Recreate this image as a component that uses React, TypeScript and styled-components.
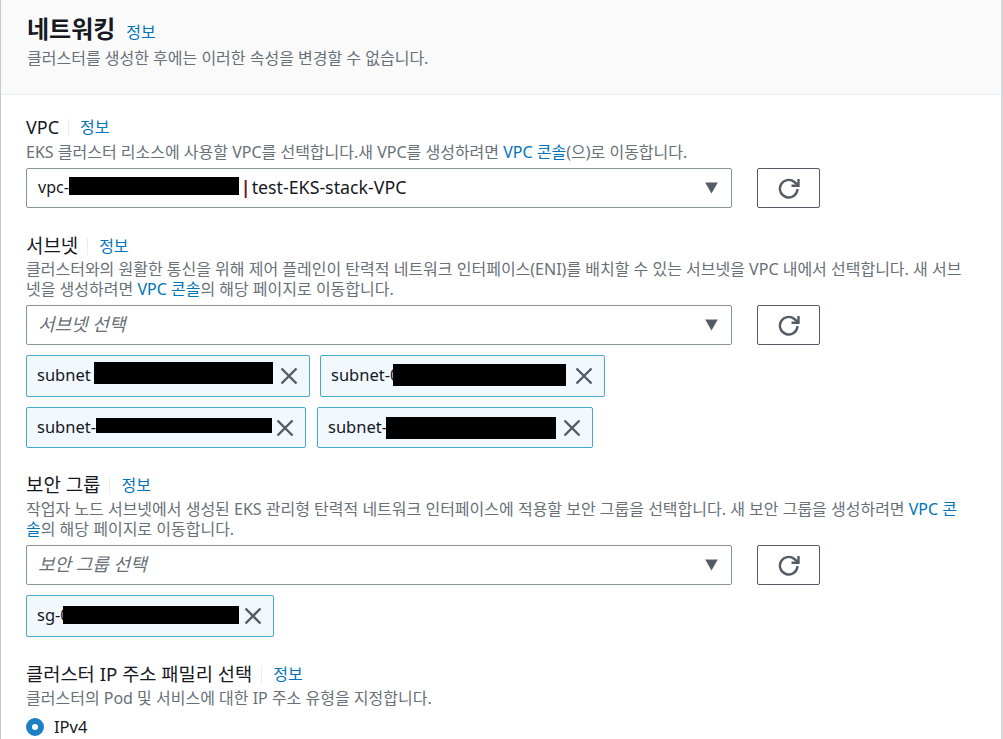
import styled, { createGlobalStyle } from "styled-components";

const GlobalStyle = createGlobalStyle`
  html, body {
    margin: 0;
    padding: 0;
    background: #fff;
    overflow: hidden;
  }
  body {
    font-family: "Noto Sans", "Noto Sans CJK KR", sans-serif;
    color: #16191f;
  }
`;

const Panel = styled.div`
  width: 1003px;
  height: 739px;
  box-sizing: border-box;
  border-left: 1px solid #c6cacd;
  border-right: 2px solid #d5d8da;
  overflow: hidden;
`;

const Header = styled.header`
  height: 95px;
  box-sizing: border-box;
  padding: 14px 26px 0;
  background: #fafafa;
  border-bottom: 1px solid #eaeded;
`;

const TitleRow = styled.div`
  display: flex;
  align-items: baseline;
  gap: 11px;
  height: 30px;
`;

const Title = styled.h2`
  margin: 0;
  font-size: 24px;
  line-height: 30px;
  font-weight: 700;
  color: #16191f;
`;

const InfoLink = styled.a`
  font-size: 16px;
  line-height: 20px;
  color: #0073bb;
`;

const HeaderDesc = styled.p`
  margin: 4px 0 0;
  font-size: 16px;
  line-height: 20px;
  color: #687078;
`;

const Body = styled.div`
  padding: 22px 25px 0;
`;

const Field = styled.section<{ $gap?: number }>`
  margin-bottom: ${p => p.$gap ?? 0}px;
`;

const LabelRow = styled.div`
  display: flex;
  align-items: center;
  height: 20px;
`;

const Label = styled.span<{ $size?: number }>`
  font-size: ${p => p.$size ?? 18.9}px;
  line-height: 20px;
  color: #16191f;
`;

const Divider = styled.span`
  width: 1px;
  height: 17px;
  margin: 0 11px 0 9px;
  background: #eaeded;
`;

const Desc = styled.p<{ $top?: number }>`
  margin: ${p => p.$top ?? 5}px 0 6px;
  width: 945px;
  font-size: 16px;
  line-height: 20px;
  color: #687078;
`;

const DescLink = styled.a`
  color: #0073bb;
`;

const SelectRow = styled.div`
  display: flex;
  align-items: center;
  gap: 25px;
`;

const SelectBox = styled.div`
  width: 706px;
  height: 40px;
  box-sizing: border-box;
  display: flex;
  align-items: center;
  justify-content: space-between;
  padding: 0 13px 0 11px;
  border: 1px solid #879596;
  border-radius: 2px;
  background: #fff;
`;

const SelectValue = styled.span`
  display: flex;
  align-items: center;
  padding-bottom: 2px;
  font-size: 17.8px;
  line-height: 22px;
  color: #16191f;
  white-space: pre;
`;

const ValuePrefix = styled.span`
  font-size: 16px;
`;

const Placeholder = styled.span`
  padding-bottom: 3px;
  font-size: 18px;
  line-height: 22px;
  font-style: italic;
  color: #687078;
`;

const Pipe = styled.span`
  margin: 0 1px 0 2px;
  font-weight: 700;
  color: #6b1626;
`;

const Redacted = styled.span<{ $w: number; $h: number; $top?: number; $left?: number }>`
  display: block;
  flex: none;
  position: relative;
  top: ${p => p.$top ?? 0}px;
  width: ${p => p.$w}px;
  height: ${p => p.$h}px;
  margin-left: ${p => p.$left ?? 0}px;
  background: #000;
`;

const RefreshButton = styled.button`
  width: 63px;
  height: 40px;
  box-sizing: border-box;
  display: flex;
  align-items: center;
  justify-content: center;
  padding: 0;
  border: 1px solid #545b64;
  border-radius: 2px;
  background: #fff;
  color: #545b64;
`;

const TokenRow = styled.div<{ $gap?: number }>`
  display: flex;
  gap: ${p => p.$gap ?? 10}px;
  margin-top: 10px;
`;

const Token = styled.div<{ $w: number; $h?: number }>`
  width: ${p => p.$w}px;
  height: ${p => p.$h ?? 42}px;
  box-sizing: border-box;
  display: flex;
  align-items: center;
  justify-content: space-between;
  padding: 0 11px 0 10px;
  border: 1px solid #44a8d0;
  border-radius: 2px;
  background: #f1f8fe;
`;

const TokenText = styled.span`
  display: flex;
  align-items: center;
  padding-bottom: 2px;
  font-size: 16.5px;
  line-height: 22px;
  color: #16191f;
`;

const RadioRow = styled.label`
  display: flex;
  align-items: center;
  gap: 10px;
  margin-top: 8px;
  font-size: 16.5px;
  line-height: 22px;
  color: #16191f;
`;

const RadioDot = styled.span`
  width: 18px;
  height: 18px;
  box-sizing: border-box;
  border: 6px solid #1f7fc4;
  border-radius: 50%;
  background: #fff;
`;

const Caret = () => (
  <svg width="13" height="12" viewBox="0 0 13 12" aria-hidden="true">
    <path d="M0.2 0.5h12.6L6.5 11.5z" fill="#545b64" />
  </svg>
);

const RefreshIcon = () => (
  <svg width="24" height="24" viewBox="0 0 24 24" fill="none" stroke="currentColor" strokeWidth="2.4" aria-hidden="true">
    <path d="M20.5 13A8.8 8.8 0 1 1 17.4 6L21 9.2" />
    <path d="M21.5 3V9.8H14.5" />
  </svg>
);

const CloseIcon = () => (
  <svg width="18" height="18" viewBox="0 0 18 18" fill="none" stroke="#545b64" strokeWidth="2.4" aria-hidden="true">
    <path d="M1.5 1.5l15 15M16.5 1.5l-15 15" />
  </svg>
);

const Info = () => <InfoLink>정보</InfoLink>;

const Refresh = () => (
  <RefreshButton type="button">
    <RefreshIcon />
  </RefreshButton>
);

export default function App() {
  return (
    <>
      <GlobalStyle />
      <Panel>
        <Header>
          <TitleRow>
            <Title>네트워킹</Title>
            <Info />
          </TitleRow>
          <HeaderDesc>클러스터를 생성한 후에는 이러한 속성을 변경할 수 없습니다.</HeaderDesc>
        </Header>
        <Body>
          <Field $gap={28}>
            <LabelRow>
              <Label $size={18}>VPC</Label>
              <Divider />
              <Info />
            </LabelRow>
            <Desc>
              EKS 클러스터 리소스에 사용할 VPC를 선택합니다.새 VPC를 생성하려면 <DescLink>VPC 콘솔</DescLink>(으)로 이동합니다.
            </Desc>
            <SelectRow>
              <SelectBox>
                <SelectValue>
                  <ValuePrefix>vpc-</ValuePrefix>
                  <Redacted $w={170} $h={18} $top={-1} />
                  <Pipe>|</Pipe>test-EKS-stack-VPC
                </SelectValue>
                <Caret />
              </SelectBox>
              <Refresh />
            </SelectRow>
          </Field>

          <Field $gap={27}>
            <LabelRow>
              <Label>서브넷</Label>
              <Divider />
              <Info />
            </LabelRow>
            <Desc $top={3}>
              클러스터와의 원활한 통신을 위해 제어 플레인이 탄력적 네트워크 인터페이스(ENI)를 배치할 수 있는 서브넷을 VPC 내에서 선택합니다. 새 서브넷을 생성하려면 <DescLink>VPC 콘솔</DescLink>의 해당 페이지로 이동합니다.
            </Desc>
            <SelectRow>
              <SelectBox>
                <Placeholder>서브넷 선택</Placeholder>
                <Caret />
              </SelectBox>
              <Refresh />
            </SelectRow>
            <TokenRow>
              <Token $w={284}>
                <TokenText>
                  subnet
                  <Redacted $w={179} $h={22} $top={-2} $left={3} />
                </TokenText>
                <CloseIcon />
              </Token>
              <Token $w={285}>
                <TokenText>
                  subnet-0
                  <Redacted $w={173} $h={22} $left={-6} />
                </TokenText>
                <CloseIcon />
              </Token>
            </TokenRow>
            <TokenRow $gap={11}>
              <Token $w={280} $h={41}>
                <TokenText>
                  subnet-
                  <Redacted $w={176} $h={15} $top={-1} />
                </TokenText>
                <CloseIcon />
              </Token>
              <Token $w={276} $h={41}>
                <TokenText>
                  subnet-
                  <Redacted $w={170} $h={22} $top={1} $left={-1} />
                </TokenText>
                <CloseIcon />
              </Token>
            </TokenRow>
          </Field>

          <Field $gap={27}>
            <LabelRow>
              <Label>보안 그룹</Label>
              <Divider />
              <Info />
            </LabelRow>
            <Desc $top={4}>
              작업자 노드 서브넷에서 생성된 EKS 관리형 탄력적 네트워크 인터페이스에 적용할 보안 그룹을 선택합니다. 새 보안 그룹을 생성하려면 <DescLink>VPC 콘솔</DescLink>의 해당 페이지로 이동합니다.
            </Desc>
            <SelectRow>
              <SelectBox>
                <Placeholder>보안 그룹 선택</Placeholder>
                <Caret />
              </SelectBox>
              <Refresh />
            </SelectRow>
            <TokenRow>
              <Token $w={248}>
                <TokenText>
                  sg-0
                  <Redacted $w={176} $h={18} $left={-7} />
                </TokenText>
                <CloseIcon />
              </Token>
            </TokenRow>
          </Field>

          <Field>
            <LabelRow>
              <Label $size={18.7}>클러스터 IP 주소 패밀리 선택</Label>
              <Divider />
              <Info />
            </LabelRow>
            <Desc $top={4}>클러스터의 Pod 및 서비스에 대한 IP 주소 유형을 지정합니다.</Desc>
            <RadioRow>
              <RadioDot />
              IPv4
            </RadioRow>
          </Field>
        </Body>
      </Panel>
    </>
  );
}
